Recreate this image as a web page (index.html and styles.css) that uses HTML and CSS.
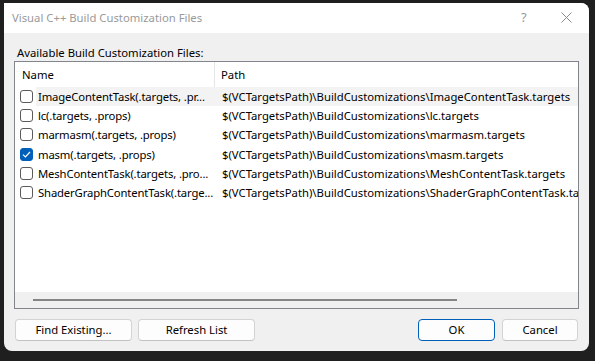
FILE: index.html
```html
<!DOCTYPE html>
<html lang="en">

<head>
    <meta charset="UTF-8">
    <meta name="viewport" content="width=device-width, initial-scale=1.0">
    <title>Visual C++ Build Customization Files</title>
    <link rel="stylesheet" href="styles.css">
</head>

<body>
    <div class="dialog">
        <div class="titlebar">
            <div class="title">Visual C++ Build Customization Files</div>
            <div class="help">?</div>
            <div class="close">
                <svg width="11" height="11" viewBox="0 0 11 11">
                    <path d="M0.5 0.5 L10.5 10.5 M10.5 0.5 L0.5 10.5" stroke="#8a8a8a" stroke-width="1" fill="none" />
                </svg>
            </div>
        </div>

        <div class="content">
            <div class="label">Available Build Customization Files:</div>

            <div class="list">
                <div class="header">
                    <div class="col-name">Name</div>
                    <div class="col-path">Path</div>
                </div>

                <div class="rows">
                    <div class="row hover">
                        <span class="check"></span>
                        <div class="name">ImageContentTask(.targets, .pr...</div>
                        <div class="path">$(VCTargetsPath)\BuildCustomizations\ImageContentTask.targets</div>
                    </div>
                    <div class="row">
                        <span class="check"></span>
                        <div class="name">lc(.targets, .props)</div>
                        <div class="path">$(VCTargetsPath)\BuildCustomizations\lc.targets</div>
                    </div>
                    <div class="row">
                        <span class="check"></span>
                        <div class="name">marmasm(.targets, .props)</div>
                        <div class="path">$(VCTargetsPath)\BuildCustomizations\marmasm.targets</div>
                    </div>
                    <div class="row">
                        <span class="check checked">
                            <svg width="9" height="7" viewBox="0 0 9 7">
                                <path d="M1 3.6 L3.4 6 L8 1" stroke="#fff" stroke-width="1.2" fill="none" />
                            </svg>
                        </span>
                        <div class="name">masm(.targets, .props)</div>
                        <div class="path">$(VCTargetsPath)\BuildCustomizations\masm.targets</div>
                    </div>
                    <div class="row">
                        <span class="check"></span>
                        <div class="name">MeshContentTask(.targets, .pro...</div>
                        <div class="path">$(VCTargetsPath)\BuildCustomizations\MeshContentTask.targets</div>
                    </div>
                    <div class="row">
                        <span class="check"></span>
                        <div class="name">ShaderGraphContentTask(.targe...</div>
                        <div class="path">$(VCTargetsPath)\BuildCustomizations\ShaderGraphContentTask.targets</div>
                    </div>
                </div>

                <div class="hscroll">
                    <div class="thumb"></div>
                </div>
            </div>

            <div class="buttons">
                <div class="btn wide">Find Existing...</div>
                <div class="btn wide">Refresh List</div>
                <div class="spacer"></div>
                <div class="btn ok">OK</div>
                <div class="btn cancel">Cancel</div>
            </div>
        </div>
    </div>
</body>

</html>
```

FILE: styles.css
```css
* {
    box-sizing: border-box;
}

body {
    margin: 0px;
    padding: 3px 0px 0px 4px;
    width: 595px;
    height: 361px;
    overflow: hidden;
    background-color: #1f1f1f;
    font-family: "Noto Sans", "Open Sans", sans-serif;
    font-size: 11.3px;
    color: #000;
}

.dialog {
    width: 585px;
    height: 348px;
    background-color: #f0f0f0;
    border-radius: 0px 8px 8px 8px;
    overflow: hidden;
    display: flex;
    flex-direction: column;
}

.titlebar {
    height: 30px;
    background-color: #fff;
    display: flex;
    align-items: center;
    padding: 0px 0px 2px 8px;
}

.title {
    flex: 1;
    color: #9a9a9a;
}

.help {
    color: #9a9a9a;
    font-size: 13px;
    width: 40px;
}

.close {
    width: 28px;
    height: 11px;
    display: flex;
}

.content {
    padding: 0px 10px;
    flex: 1;
}

.label {
    margin-top: 12px;
    height: 16px;
    line-height: 16px;
    padding-left: 3px;
}

.list {
    height: 248px;
    background-color: #fff;
    border: 1px solid #82868c;
    display: flex;
    flex-direction: column;
}

.header {
    height: 25px;
    display: flex;
    line-height: 25px;
}

.col-name {
    width: 200px;
    padding-left: 7px;
    border-right: 1px solid #e5e5e5;
}

.col-path {
    padding-left: 6px;
}

.rows {
    flex: 1;
    overflow: hidden;
}

.row {
    height: 19.2px;
    display: flex;
    align-items: center;
    white-space: nowrap;
}

.row.hover .name,
.row.hover .path {
    background-color: #f3f3f3;
}

.check {
    width: 13px;
    height: 13px;
    margin: 0px 3px 0px 5px;
    border: 1px solid #5b5b5b;
    border-radius: 3px;
    display: flex;
    align-items: center;
    justify-content: center;
    flex-shrink: 0;
}

.check.checked {
    background-color: #005fb8;
    border-color: #005fb8;
}

.name {
    width: 179px;
    padding-left: 2px;
    line-height: 19px;
    letter-spacing: -0.15px;
    overflow: hidden;
    flex-shrink: 0;
}

.path {
    flex: 1;
    padding-left: 7px;
    line-height: 19px;
    overflow: hidden;
}

.hscroll {
    height: 16px;
    background-color: #f0f0f0;
    padding: 7px 0px 0px 18px;
}

.thumb {
    width: 424px;
    height: 2px;
    background-color: #858585;
}

.buttons {
    display: flex;
    margin-top: 10px;
    padding: 0px 1px;
    gap: 6px;
}

.spacer {
    flex: 1;
}

.btn {
    height: 22px;
    line-height: 20px;
    text-align: center;
    background-color: #fdfdfd;
    border: 1px solid #d3d3d3;
    border-bottom-color: #c2c2c2;
    border-radius: 4px;
}

.btn.wide {
    width: 117px;
}

.btn.ok {
    width: 77px;
    border-color: #005fb8;
    margin-right: 1px;
}

.btn.cancel {
    width: 76px;
}
```
